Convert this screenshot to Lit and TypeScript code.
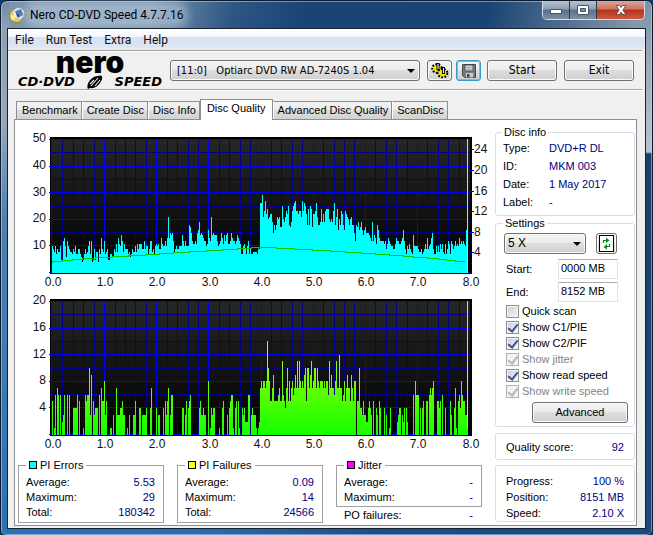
import { LitElement, html, svg, css } from "lit";
import { customElement } from "lit/decorators.js";

const UI = css`"Liberation Sans", Arial, sans-serif`;
const SHELL = css`Roboto, "Noto Sans", sans-serif`;
const DIALOG = css`"DejaVu Sans Condensed", "DejaVu Sans", sans-serif`;

// One base-36 digit per plotted column.
const PI_ERRORS =
  "a98a7988a5" + "5cda6ca988" + "798a779976" + "45797" + "8ac7c" + "459588497d" +
  "98c7895577" + "6698b8dbae" + "c8b9997867" + "988a8b9bbb" + "99c9aa79cc" +
  "897abab99d" + "baacadldfe" + "fc89a99" + "aaa" + "ecacaaaihf" + "cbbcbfgjef" +
  "edccabgdcl" + "efeeecabcf" + "dbecefbbcf" + "dccbcedcb7" + "7ab97ac7" +
  "9778888799" + "qqtlnrmokl" + "mmjfigilkl" + "hhpkjlnmpi" + "hjnpqrnnmn" +
  "nlrnqpmioi" + "pohmmnqlii" + "jojmjnoook" + "jkjnqilogk" + "inmignmlki" +
  "kliifcihjg" + "hjgeghfffe" + "dcjcedbigd" + "ccccbc9bdc" + "baa99bdccb" +
  "bcdgc97a9b" + "987eaaaa98" + "8978" + "9b9d9a" + "bdf977a8a8" + "b9b87b79cb" +
  "7cb9acabad" + "bcbcbag";

const PI_FAILURES =
  "5016076060" + "2360060600" + "0444460500" + "0106566a39" + "0534440607" +
  "5583500011" + "0300733344" + "5330010300" + "0335000440" + "3333400047" +
  "0000403300" + "0405357036" + "6000000000" + "4403504560" + "0000000453" +
  "3433008014" + "3440000100" + "4500030456" + "6104505100" + "434222660" +
  "34333101" + "2" + "7878878ea8" + "5579555567" + "55b6547a58" + "5786797b7b" +
  "87879a5aa7" + "9b78aa7a87" + "888787886b" + "797768b77c" + "7756857977" +
  "597588055a" + "4435332245" + "4305004305" + "4000403001" + "4000000234" +
  "4032404200" + "0006086660" + "4045005506" + "7678000554" + "5060040000" +
  "5300471056" + "48655331";

const decode = (s: string) => Array.from(s, (c) => parseInt(c, 36));

@customElement("scan-chart")
class ScanChart extends LitElement {
  static properties = {
    kind: {},
    label: {},
  };
  declare kind: "errors" | "failures";
  declare label: string;

  static styles = css`
    :host { display: block; }
    svg { display: block; width: 100%; height: auto; }
    text { font: 12px "Liberation Sans", Arial, sans-serif; fill: #111; }
    .end { text-anchor: end; }
    .mid { text-anchor: middle; }
    .crisp { shape-rendering: crispEdges; }
    .major { fill: #0000ff; }
    .minor { fill: #00008b; }
  `;

  render() {
    const errors = this.kind === "errors";
    const max = errors ? 50 : 20;
    const values = decode(errors ? PI_ERRORS : PI_FAILURES).slice(0, 416);
    const left = 37, top = 11, base = 145;
    const unit = 134 / max;
    const rows = Array.from({ length: 11 }, (_, i) => i);
    const cols = Array.from({ length: 40 }, (_, i) => i);
    const ticks = Array.from({ length: 9 }, (_, i) => i);
    const bars = values
      .map((v, i) => {
        const h = Math.round(v * unit);
        return h ? `M${left + i} ${base}v${-h}h1v${h}z` : "";
      })
      .join("");
    return html`
      <svg viewBox="0 0 480 162" role="img" aria-label=${this.label}>
        <defs>
          <linearGradient id="bg" x1="0" y1="0" x2="0" y2="1">
            <stop offset="0" stop-color="#262626" />
            <stop offset="1" stop-color="#000" />
          </linearGradient>
          <linearGradient id="heat" gradientUnits="userSpaceOnUse" x1="0" y1="145" x2="0" y2="45">
            <stop offset="0" stop-color="#14ff00" />
            <stop offset=".5" stop-color="#66ff00" />
            <stop offset="1" stop-color="#ccff00" />
          </linearGradient>
        </defs>
        <g class="crisp">
          <rect x="35" y="9" width="422" height="137" fill="#000" />
          <rect x="37" y="12" width="418" height="133" fill="url(#bg)" />
          ${cols.map((i) => svg`<rect class=${i % 5 ? "minor" : "major"} x=${Math.round(left + i * 10.43) - (i ? 0 : 1)} y="11" width="1" height="134" />`)}
          ${rows.map((i) => svg`<rect class=${i % 2 ? "minor" : "major"} x=${i % 2 ? 35 : 34} y=${Math.round(top + i * 13.3)} width=${i % 2 ? 420 : 421} height="1" />`)}
          <rect x="452" y="11" width="1" height="134" fill="#d0d0d0" />
          <path d=${bars} fill=${errors ? "#00ffff" : "url(#heat)"} />
          ${errors
            ? svg`<path d="M37 134V132H47V131H57V130H67V129H80V128H97V127H113V126H130V125H144V124H158V123H174V122H191V121H207V120H222V119H236V118H243V121M243 118H261V119H279V120H297V121H315V122H330V123H346V124H360V125H374V126H388V127H398V128H412V129H423V130H431V131H440V132H450" fill="none" stroke="#00c800" transform="translate(0 1)" />
              ${[1, 2, 3, 4, 5, 6].map((n) => svg`<rect class="major" x="455" y=${145 - Math.round(n * 20.6)} width="4" height="1" />`)}
              ${[0, 1, 2, 3, 4, 5].map((n) => svg`<rect class="minor" x="455" y=${135 - Math.round(n * 20.6)} width="2" height="1" />`)}`
            : ""}
        </g>
        ${[0, 1, 2, 3, 4].map((i) => svg`<text class="end" x="31" y=${Math.round(14 + i * 26.8)}>${max - (i * max) / 5}</text>`)}
        ${errors ? [1, 2, 3, 4, 5, 6].map((n) => svg`<text x="459" y=${149 - Math.round(n * 20.6)}>${n * 4}</text>`) : ""}
        ${ticks.map((n) => svg`<text class="mid" x=${Math.round(38 + n * 52.2)} y="158">${n}.0</text>`)}
      </svg>
    `;
  }
}
void ScanChart;

@customElement("app-root")
class AppRoot extends LitElement {
  static styles = css`
    * { box-sizing: border-box; }
    :host { display: block; min-height: 100vh; background: #0b3a6e; font: 11px/15px ${UI}; color: #000; }
    .window {
      min-height: 100vh; display: flex; flex-direction: column;
      padding: 0 7px 7px 7px; border: 1px solid #0b1a2e;
      border-radius: 7px 7px 6px 6px;
      background:
        linear-gradient(#6f89a4 0, #8ba0b4 24px, #95a8ba 120px, #4d80b0 220px, #2a72b4 100%) left / 8px 100% no-repeat,
        linear-gradient(#7890a8 0, #9aa9b8 60px, #b8c4d0 151px, #1c3f6a 153px, #1e4878 100%) right / 8px 100% no-repeat,
        linear-gradient(90deg, #2c72b6, #2a6cb0 30%, #1b4c86 60%, #1d4a80) bottom / 100% 8px no-repeat,
        linear-gradient(100deg, #7d96af 0, #7893ae 150px, #2d5684 230px, #1a4475 300px, #194372 480px, #48678a 545px, #8698ab 630px);
      box-shadow: inset 0 0 0 1px rgba(190, 215, 235, 0.55);
    }
    .titlebar { display: flex; height: 28px; align-items: flex-start; }
    .caption {
      display: flex; align-items: center; gap: 5px; height: 28px; padding: 0 16px 0 1px;
      font: 12px/18px ${SHELL};
    }
    .caption-text { box-shadow: 0 0 9px 5px rgba(190, 210, 228, 0.5); background: rgba(190, 210, 228, 0.5); border-radius: 8px; }
    .caption svg { display: block; }
    .window-buttons { display: flex; margin-left: auto; border: 1px solid #d3dde6; border-top: 0; border-radius: 0 0 5px 5px; height: 19px; overflow: hidden; }
    .window-buttons button { border: 0; border-right: 1px solid #26384d; padding: 0; width: 27px; display: grid; place-items: center; background: linear-gradient(#b6c2cf 0, #8fa0b2 45%, #5b7189 50%, #7d91a6 100%); }
    .window-buttons .close { width: 47px; border-right: 0; background: linear-gradient(#dfa598 0, #cf7160 45%, #b4321c 50%, #cc5a3e 100%); }
    .client { flex: 1; display: flex; flex-direction: column; background: #f0f0f0; outline: 1px solid #17222f; }
    .menu { display: flex; height: 21px; padding-left: 1px; background: linear-gradient(#fff 0, #f6f8fd 35%, #d9e0f0 40%, #dde4f4 85%, #f0f0f0 100%); }
    .menu button { border: 0; background: none; padding: 0 6px; font: 12px/20px ${SHELL}; color: #111; }
    .toolbar { display: flex; align-items: center; height: 40px; margin-right: 3px; padding: 1px 8px 0 10px; border-top: 1px solid #a0a0a0; border-bottom: 1px solid #a0a0a0; box-shadow: inset 0 1px #fff, 0 1px #fff; }
    .logo { width: 144px; margin-right: 8px; }
    .logo-name { font: 900 30px/18px Inter, sans-serif; text-align: center; height: 22px; }
    .logo-product { display: flex; justify-content: space-between; align-items: center; font: italic bold 13px/14px "DejaVu Sans", sans-serif; height: 14px; }
    .logo-product svg { display: block; }
    button.push, .pick select {
      border: 1px solid #707070; border-radius: 3px; color: #000;
      background: linear-gradient(#f3f3f3 0, #ebebeb 49%, #dddddd 50%, #cfcfcf 100%);
      box-shadow: inset 0 0 0 1px #fbfbfb;
    }
    button.push { height: 21px; padding: 0; font: 12px/17px ${DIALOG}; }
    .toolbar .push { width: 70px; margin-left: 7px; }
    .toolbar .square { width: 25px; margin-left: 4px; display: grid; place-items: center; }
    .toolbar .first { margin-left: 7px; }
    .toolbar .hot { border-color: #3c9ac8; box-shadow: inset 0 0 0 1px #46d2fa; margin-right: -1px; }
    .pick { position: relative; flex: 1; }
    .pick::after { content: ""; position: absolute; right: 5px; top: 9px; border: 4px solid transparent; border-top-color: #000; border-bottom: 0; pointer-events: none; }
    .pick select { display: block; appearance: none; width: 100%; height: 21px; padding: 0 16px 0 6px; font: 11px/17px ${DIALOG}; }
    .tabs { display: flex; align-items: flex-end; height: 20px; margin: 9px 0 0 8px; }
    .tabs button { height: 18px; padding: 0 3px 0 4px; border: 1px solid #8c8e94; border-left-color: #fff; border-bottom: 0; background: linear-gradient(#f3f3f3 0, #ebebeb 49%, #dddddd 50%, #d2d2d2 100%); font: 11px/17px ${UI}; white-space: nowrap; color: #000; }
    .tabs button:first-child { border-left-color: #8c8e94; padding-left: 5px; }
    .tabs .active { height: 21px; margin-bottom: -1px; padding: 0 6px 3px; background: #fff; border-left-color: #8c8e94; position: relative; }
    .page { display: flex; margin: 0 8px 2px 6px; padding-right: 1px; border: 1px solid #8c8e94; background: #fff; }
    .main { flex: 1; min-width: 0; padding-top: 8px; }
    .stats { display: grid; grid-template-columns: repeat(3, 1fr); gap: 13px; padding: 6px 13px 2px 3px; }
    fieldset { margin: 0; min-width: 0; border: 1px solid #a0a0a0; padding: 3px 8px 1px 7px; }
    legend { padding: 0 3px; margin-left: 0; line-height: 14px; height: 14px; }
    .swatch { display: inline-block; width: 8px; height: 8px; border: 1px solid #000; margin-right: 3px; }
    .cyan { background: #0ff; } .yellow { background: #ff0; } .magenta { background: #f0f; }
    dl, dd { margin: 0; }
    .row { display: flex; justify-content: space-between; }
    dd { color: #000080; }
    .outside { padding: 1px 9px 0 8px; }
    .side { width: 140px; padding-top: 5px; display: flex; flex-direction: column; }
    .side fieldset, .card { border: 1px solid #d5dfe5; border-radius: 3px; }
    .side .disc { padding: 0 6px 4px 7px; }
    .side legend { padding: 0 2px; margin-left: -1px; }
    .disc .row { display: grid; grid-template-columns: 46px 1fr; line-height: 18px; }
    .side .settings { padding: 3px 6px 3px 8px; }
    .speed { display: flex; gap: 10px; margin-bottom: 5px; padding-right: 11px; }
    .speed .pick select { font: 12px/17px ${UI}; padding-left: 3px; }
    .speed .push { width: 21px; display: grid; place-items: center; }
    .field { display: flex; justify-content: space-between; align-items: center; height: 20px; margin-bottom: 3px; padding: 0 10px 0 2px; }
    .field input { width: 60px; height: 20px; border: 1px solid #dfe3ea; border-top-color: #abadb3; padding: 0 2px 2px; font: 11px/15px ${UI}; color: #000; }
    .checks { margin-top: -2px; }
    .check { display: flex; align-items: center; gap: 3px; height: 16px; padding-left: 2px; }
    .check input { appearance: none; margin: 0; width: 13px; height: 13px; border: 1px solid #8e8f8f; background: linear-gradient(135deg, #cbcfd5, #f6f6f6); box-shadow: inset 0 0 0 1px #f4f4f4; display: grid; place-items: center; }
    .check input:checked::before { content: ""; width: 4px; height: 8px; margin-bottom: 2px; border: solid #3b4f92; border-width: 0 2px 2px 0; transform: rotate(38deg); }
    .check input:disabled { border-color: #b1b1b1; background: #f3f3f3; }
    .check input:disabled:checked::before { border-color: #b4b4b4; }
    .check.off { color: #838383; }
    .settings button.advanced { display: block; width: 96px; margin: 3px 0 0 auto; font: 11px/17px ${UI}; }
    .card { padding: 0 10px; }
    .score { height: 27px; margin-top: 6px; line-height: 26px; }
    .progress { height: 57px; margin-top: 5px; padding-top: 7px; line-height: 16px; }
  `;

  private check(text: string, on: boolean, off = false) {
    return html`<label class="check ${off ? "off" : ""}"><input type="checkbox" .checked=${on} ?disabled=${off} />${text}</label>`;
  }

  private rows(items: [string, string][]) {
    return html`<dl>${items.map(([k, v]) => html`<div class="row"><dt>${k}</dt><dd>${v}</dd></div>`)}</dl>`;
  }

  render() {
    return html`
      <div class="window">
        <header class="titlebar">
          <div class="caption">
            <svg width="16" height="16" viewBox="0 0 16 16">
              <circle cx="7.500" cy="8.500" r="7" fill="#e8d24a" stroke="#8b7418" stroke-width=".8" />
              <circle cx="9.500" cy="6.500" r="5.800" fill="#e9eef2" stroke="#9aa6b0" stroke-width=".6" />
              <path d="M6 4l6-2 2.500 6-6 3z" fill="#4b86c4" />
              <path d="M9.500 4l3.500.5-1.500 2.500z" fill="#d2372b" /><path d="M7 5l4 4-2.500 1z" fill="#2c4f86" />
              <circle cx="4" cy="10.500" r="2.400" fill="#f8ef9c" />
            </svg>
            <span class="caption-text">Nero CD-DVD Speed 4.7.7.16</span>
          </div>
          <div class="window-buttons">
            <button aria-label="Minimize"><svg width="12" height="12"><rect x=".5" y="5.500" width="11" height="4" fill="#fff" stroke="#4a5564" /></svg></button>
            <button aria-label="Maximize"><svg width="12" height="12"><path d="M.5 1.500h11v9H.5z" fill="#fff" stroke="#4a5564" /><path d="M3.500 4.500h5v3h-5z" fill="#7d91a6" stroke="#4a5564" /></svg></button>
            <button class="close" aria-label="Close"><svg width="12" height="12"><path d="M1 1.500h3.200l1.800 2 1.800-2H11L7.800 6l3.200 4.500H7.800L6 8.300l-1.800 2.200H1L4.200 6z" fill="#fff" stroke="#5b3a3a" stroke-width=".8" /></svg></button>
          </div>
        </header>
        <main class="client">
          <nav class="menu">
            ${["File", "Run Test", "Extra", "Help"].map((m) => html`<button>${m}</button>`)}
          </nav>
          <div class="toolbar">
            <div class="logo">
              <div class="logo-name">nero</div>
              <div class="logo-product">
                <span>CD·DVD</span>
                <svg width="18" height="14" viewBox="0 0 18 14"><path d="M2 14C-.5 10 5 1 12 1c2-1 5-1 4 3-2 6-7 10-12 9z" /><path d="M5 11l7-8M8 5l-4 4M14 5l-5 6" stroke="#f0f0f0" stroke-width="1.100" fill="none" /></svg>
                <span>SPEED</span>
              </div>
            </div>
            <div class="pick"><select aria-label="Drive"><option>[11:0]\u00a0\u00a0 Optiarc DVD RW AD-7240S 1.04</option></select></div>
            <button class="push square first" aria-label="Options">
              <svg width="18" height="17" viewBox="0 0 18 17">
                <ellipse cx="6" cy="6.500" rx="4.300" ry="3.800" fill="#f4e800" />
                <ellipse cx="6" cy="6.500" rx="4.800" ry="4.300" fill="none" stroke="#000" stroke-width="2" stroke-dasharray="1.800 1.400" />
                <ellipse cx="11.500" cy="11" rx="4.300" ry="3.800" fill="#f4e800" />
                <ellipse cx="11.500" cy="11" rx="4.800" ry="4.300" fill="none" stroke="#000" stroke-width="2" stroke-dasharray="1.800 1.400" />
                <path d="M7 1v7M12.500 5v7" stroke="#000" stroke-width="3" /><path d="M7 2v5M12.500 6v5" stroke="#e8e8e8" stroke-width="1.200" />
              </svg>
            </button>
            <button class="push square hot" aria-label="Save">
              <svg width="14" height="14" viewBox="0 0 14 14"><path d="M.5.5h13v13h-11l-2-2z" fill="#777c80" stroke="#43474b" /><path d="M3 1h8v6H3z" fill="#cfd2d4" stroke="#43474b" stroke-width=".8" /><path d="M4.500 3.500h5M4.500 5.500h5" stroke="#a4a8ab" /><path d="M4 9h7v4.500H4z" fill="#c9cccf" /><path d="M5 10h2.500v3.500H5z" fill="#43474b" /></svg>
            </button>
            <button class="push">Start</button>
            <button class="push">Exit</button>
          </div>
          <div class="tabs" role="tablist">
            ${["Benchmark", "Create Disc", "Disc Info", "Disc Quality", "Advanced Disc Quality", "ScanDisc"].map(
              (t) => html`<button role="tab" class=${t === "Disc Quality" ? "active" : ""}>${t}</button>`
            )}
          </div>
          <section class="page">
            <div class="main">
              <scan-chart kind="errors" label="PI Errors"></scan-chart>
              <scan-chart kind="failures" label="PI Failures"></scan-chart>
              <div class="stats">
                <fieldset>
                  <legend><span class="swatch cyan"></span>PI Errors</legend>
                  ${this.rows([["Average:", "5.53"], ["Maximum:", "29"], ["Total:", "180342"]])}
                </fieldset>
                <fieldset>
                  <legend><span class="swatch yellow"></span>PI Failures</legend>
                  ${this.rows([["Average:", "0.09"], ["Maximum:", "14"], ["Total:", "24566"]])}
                </fieldset>
                <div>
                  <fieldset>
                    <legend><span class="swatch magenta"></span>Jitter</legend>
                    ${this.rows([["Average:", "-"], ["Maximum:", "-"]])}
                  </fieldset>
                  <div class="outside">${this.rows([["PO failures:", "-"]])}</div>
                </div>
              </div>
            </div>
            <aside class="side">
              <fieldset class="disc">
                <legend>Disc info</legend>
                ${this.rows([["Type:", "DVD+R DL"], ["ID:", "MKM 003"], ["Date:", "1 May 2017"], ["Label:", "-"]])}
              </fieldset>
              <fieldset class="settings">
                <legend>Settings</legend>
                <div class="speed">
                  <div class="pick"><select aria-label="Speed"><option>5 X</option></select></div>
                  <button class="push" aria-label="Refresh">
                    <svg width="15" height="17" viewBox="0 0 15 17"><rect x=".5" y=".5" width="14" height="16" fill="#fff" stroke="#000" /><path d="M4.500 8V5.500H7M10.500 9v2.500H8" fill="none" stroke="#0a8a1a" stroke-width="1.200" /><path d="M7 2.500l3.500 3L7 8zM8 9l-3.500 3L8 14.500z" fill="#0a8a1a" /></svg>
                  </button>
                </div>
                <div class="field"><label for="start">Start:</label><input id="start" value="0000 MB" /></div>
                <div class="field"><label for="end">End:</label><input id="end" value="8152 MB" /></div>
                <div class="checks">
                  ${this.check("Quick scan", false)} ${this.check("Show C1/PIE", true)}
                  ${this.check("Show C2/PIF", true)} ${this.check("Show jitter", true, true)}
                  ${this.check("Show read speed", true)} ${this.check("Show write speed", true, true)}
                </div>
                <button class="push advanced">Advanced</button>
              </fieldset>
              <div class="card score">${this.rows([["Quality score:", "92"]])}</div>
              <div class="card progress">
                ${this.rows([["Progress:", "100 %"], ["Position:", "8151 MB"], ["Speed:", "2.10 X"]])}
              </div>
            </aside>
          </section>
        </main>
      </div>
    `;
  }
}
void AppRoot;
